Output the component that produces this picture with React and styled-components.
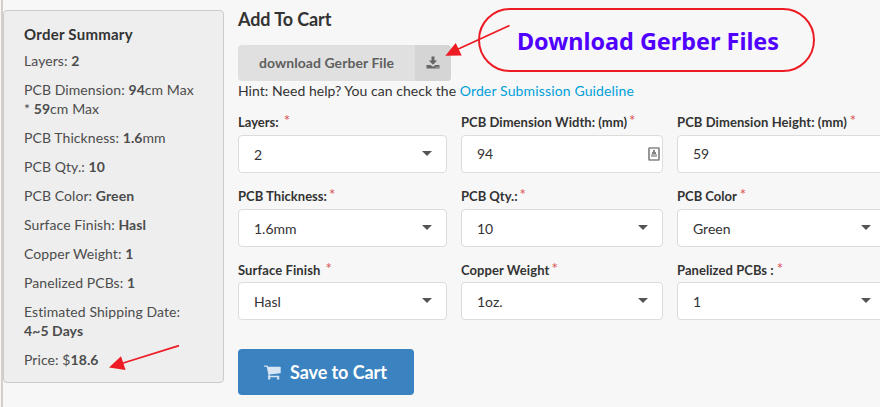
import React from "react";
import styled, { createGlobalStyle } from "styled-components";

const GlobalStyle = createGlobalStyle`
  *, *::before, *::after { box-sizing: border-box; }
  body {
    margin: 0;
    background: #f7f7f7;
    font-family: Lato, "Liberation Sans", sans-serif;
    font-size: 14px;
    line-height: 19px;
    color: #333;
    overflow: hidden;
  }
`;

const Page = styled.div`
  position: relative;
  display: flex;
  align-items: flex-start;
  width: 880px;
  height: 407px;
  overflow: hidden;
  background: #f7f7f7;
`;

const Rail = styled.div`
  flex: none;
  width: 2px;
  height: 407px;
  margin-left: 1px;
  background: #d4d0c8;
`;

const Summary = styled.aside`
  flex: none;
  width: 221px;
  height: 373px;
  margin-top: 10px;
  padding: 13px 20px;
  border: 1px solid #cbcbcb;
  border-radius: 4px;
  background: #eee;
  color: #4c4c4c;
`;

const SummaryTitle = styled.h2`
  margin: 0 0 7px;
  font-size: 15px;
  line-height: 20px;
  font-weight: 700;
  letter-spacing: 0.25px;
  color: #333;
`;

const SummaryRow = styled.p`
  margin: 0 0 10px;
  letter-spacing: 0.08px;
  white-space: nowrap;
`;

const Main = styled.main`
  flex: none;
  width: 648px;
  padding: 7px 0 0;
  margin-left: 14px;
`;

const Title = styled.h1`
  margin: 0;
  font-size: 18px;
  line-height: 24px;
  font-weight: 700;
  letter-spacing: -0.1px;
`;

const DownloadButton = styled.button`
  display: flex;
  align-items: stretch;
  width: 213px;
  height: 36px;
  margin-top: 14px;
  padding: 0;
  border: 0;
  border-radius: 4px;
  overflow: hidden;
  background: #e0e0e0;
  color: #5f5f5f;
  font: 700 14px/36px Lato, sans-serif;
  letter-spacing: 0.06px;
`;

const DownloadLabel = styled.span`
  flex: 1;
  text-align: center;
`;

const DownloadIcon = styled.span`
  display: flex;
  align-items: center;
  justify-content: center;
  width: 36px;
  padding-right: 1px;
  background: #d5d5d5;
`;

const Hint = styled.p`
  margin: 0;
  letter-spacing: 0.04px;
`;

const Link = styled.a`
  color: #009fda;
  letter-spacing: 0.14px;
  text-decoration: none;
`;

const Fields = styled.div`
  display: grid;
  grid-template-columns: 209px 202px 209px;
  grid-template-rows: 74px 73px 60px;
  column-gap: 14px;
  margin-top: 13px;
`;

const Field = styled.div`
  height: 60px;
`;

const FieldLabel = styled.label`
  display: flex;
  align-items: flex-start;
  height: 22px;
  padding-top: ${(p) => p.$drop || 0}px;
  font-size: 13px;
  line-height: 18px;
  font-weight: 700;
  letter-spacing: ${(p) => p.$tracking || 0}px;
  white-space: pre;
`;

const Required = styled.span`
  margin-left: ${(p) => p.$gap}px;
  margin-top: -2px;
  font-size: 15px;
  font-weight: 400;
  letter-spacing: 0;
  color: #db4f4f;
`;

const Control = styled.div`
  display: flex;
  align-items: center;
  justify-content: space-between;
  height: 38px;
  padding: 0 15px;
  padding-right: ${(p) => (p.$input ? 2 : 14)}px;
  border: 1px solid #dcdcdc;
  border-radius: 4px;
  background: #fff;
`;

const Value = styled.span`
  margin-top: ${(p) => (p.$input ? -2 : 0)}px;
`;

const Caret = styled.span`
  width: 0;
  height: 0;
  margin-top: -1px;
  border: 5px solid transparent;
  border-top-color: #555;
  border-bottom: 0;
`;

const SaveButton = styled.button`
  display: flex;
  align-items: center;
  width: 176px;
  height: 46px;
  margin-top: 29px;
  padding: 0 0 0 26px;
  gap: 8px;
  border: 0;
  border-radius: 4px;
  background: #3b83c0;
  color: #fff;
  font: 700 18px/24px Lato, sans-serif;
  letter-spacing: -0.07px;
`;

const Callout = styled.div`
  position: absolute;
  left: 478px;
  top: 8px;
  width: 337px;
  height: 64px;
  padding-left: 3px;
  border: 2px solid #ed1c24;
  border-radius: 32px;
  color: #5000ff;
  font: 700 23.4px/63px "Noto Sans", sans-serif;
  text-align: center;
  white-space: nowrap;
`;

const Arrows = styled.svg`
  position: absolute;
  left: 0;
  top: 0;
  pointer-events: none;
`;

const CartIcon = () => (
  <svg width="18" height="18" viewBox="0 0 1792 1792" fill="#fff" opacity=".8">
    <path d="M640 1536q0 52-38 90t-90 38-90-38-38-90 38-90 90-38 90 38 38 90zm896 0q0 52-38 90t-90 38-90-38-38-90 38-90 90-38 90 38 38 90zm128-1088v512q0 24-16.500 42.500t-40.500 21.500l-1044 122q13 60 13 70 0 16-24 64h920q26 0 45 19t19 45-19 45-45 19h-1024q-26 0-45-19t-19-45q0-11 8-31.500t16-36 21.500-40 15.500-29.500l-177-823h-204q-26 0-45-19t-19-45 19-45 45-19h256q16 0 28.500 6.500t19.500 15.500 13 24.500 8 26 5.500 29.500 4.500 26h1201q26 0 45 19t19 45z" />
  </svg>
);

const TrayIcon = () => (
  <svg width="14" height="14" viewBox="0 0 14 14" fill="#666">
    <path d="M5.500 .5h3v4h2.700L7 8.700 2.800 4.500h2.700z" />
    <path fillRule="evenodd" d="M.5 9h4L7 10.800 9.500 9h4v3.500H.5zM9.700 10.800v.9h.9v-.9zM11.600 10.800v.9h.9v-.9z" />
  </svg>
);

const AutofillIcon = () => (
  <svg width="12" height="14" viewBox="0 0 12 14">
    <rect x="1" y="1" width="10" height="12" rx=".5" fill="#fff" stroke="#858585" strokeWidth="1.7" />
    <path d="M5 3h2v2h1v2H4V5h1z" fill="#858585" />
    <path d="M3 7h6v3H3z" fill="#b0b0b0" />
  </svg>
);

const summary = [
  <>Layers: <b>2</b></>,
  <>PCB Dimension: <b>94</b>cm Max<br />* <b>59</b>cm Max</>,
  <>PCB Thickness: <b>1.6</b>mm</>,
  <>PCB Qty.: <b>10</b></>,
  <>PCB Color: <b>Green</b></>,
  <>Surface Finish: <b>Hasl</b></>,
  <>Copper Weight: <b>1</b></>,
  <>Panelized PCBs: <b>1</b></>,
  <>Estimated Shipping Date:<br /><b>4~5 Days</b></>,
  <>Price: $<b>18.6</b></>,
];

const fields = [
  { label: "Layers:", value: "2", gap: 5 },
  { label: "PCB Dimension Width: (mm)", value: "94", gap: 2, tracking: 0.04, input: true, icon: true },
  { label: "PCB Dimension Height: (mm)", value: "59", gap: 3, tracking: 0.08, input: true },
  { label: "PCB Thickness:", value: "1.6mm", gap: 2, tracking: 0.03 },
  { label: "PCB Qty.:", value: "10", gap: 2 },
  { label: "PCB Color", value: "Green", gap: 3 },
  { label: "Surface Finish", value: "Hasl", gap: 5, tracking: 0.1, drop: 1 },
  { label: "Copper Weight", value: "1oz.", gap: 2, tracking: 0.08, drop: 1 },
  { label: "Panelized PCBs :", value: "1", gap: 3, tracking: 0.06, drop: 1 },
];

export default function App() {
  return (
    <Page>
      <GlobalStyle />
      <Rail />
      <Summary>
        <SummaryTitle>Order Summary</SummaryTitle>
        {summary.map((row, i) => (
          <SummaryRow key={i}>{row}</SummaryRow>
        ))}
      </Summary>
      <Main>
        <Title>Add To Cart</Title>
        <DownloadButton>
          <DownloadLabel>download Gerber File</DownloadLabel>
          <DownloadIcon><TrayIcon /></DownloadIcon>
        </DownloadButton>
        <Hint>
          Hint: Need help? You can check the <Link>Order Submission Guideline</Link>
        </Hint>
        <Fields>
          {fields.map((f) => (
            <Field key={f.label}>
              <FieldLabel $tracking={f.tracking} $drop={f.drop}>
                {f.label}
                <Required $gap={f.gap}>*</Required>
              </FieldLabel>
              <Control $input={f.input}>
                <Value $input={f.input}>{f.value}</Value>
                {!f.input && <Caret />}
                {f.icon && <AutofillIcon />}
              </Control>
            </Field>
          ))}
        </Fields>
        <SaveButton>
          <CartIcon />
          Save to Cart
        </SaveButton>
      </Main>
      <Callout>Download Gerber Files</Callout>
      <Arrows width="880" height="407" viewBox="0 0 880 407" fill="#ed1c24" stroke="none">
        <path d="M509.500 25.500L455 50.500" stroke="#ed1c24" strokeWidth="1.8" />
        <path d="M445.300 55.800L455.700 43L461.700 55.500z" />
        <path d="M179 345.700L120 364" stroke="#ed1c24" strokeWidth="1.8" />
        <path d="M109 367.500L121 356.300L125.600 370z" />
      </Arrows>
    </Page>
  );
}
